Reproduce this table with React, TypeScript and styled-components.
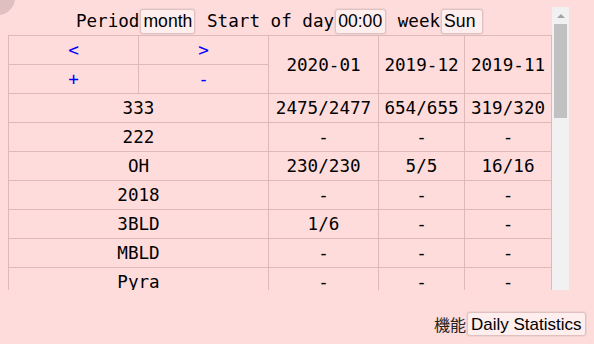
import React from 'react';
import styled, {createGlobalStyle} from 'styled-components';

const GlobalStyle = createGlobalStyle`
  html, body {
    margin: 0;
    padding: 0;
    background: #ffdcdc;
  }
  body {
    font-family: "DejaVu Sans Mono", monospace;
  }
`

const Page = styled.div`
  position: relative;
  width: 594px;
  height: 344px;
  box-sizing: border-box;
  padding: 7px 8px 0 8px;
  overflow: hidden;
`

const Corner = styled.div`
  position: absolute;
  left: -19px;
  top: -19px;
  width: 34px;
  height: 34px;
  border-radius: 50%;
  background: #dfbfbf;
`

const Frame = styled.div`
  display: flex;
  width: 561px;
  height: 283px;
`

const Scroller = styled.div`
  width: 544px;
  height: 100%;
  overflow: hidden;
`

const ScrollBar = styled.div`
  width: 17px;
  height: 100%;
  background: #f1f1f1;
  display: flex;
  flex-direction: column;
  align-items: center;
`

const ArrowUp = styled.div`
  width: 17px;
  height: 17px;
  display: flex;
  align-items: center;
  justify-content: center;
  &::before {
    content: '';
    width: 0;
    height: 0;
    border-left: 4px solid transparent;
    border-right: 4px solid transparent;
    border-bottom: 4px solid #a3a3a3;
  }
`

const Thumb = styled.div<{$size: number}>`
  width: 13px;
  height: ${(p) => p.$size}px;
  background: #c1c1c1;
`

const Options = styled.div`
  width: 544px;
  height: 28px;
  display: flex;
  align-items: center;
  justify-content: center;
  white-space: pre;
  font-size: 17.6px;
  color: #000;
`

const Pick = styled.select`
  appearance: none;
  -webkit-appearance: none;
  height: 25px;
  margin: 0 1px;
  padding: 0 2px;
  border: 1px solid #e2c0c0;
  box-shadow: 0 0 0 1px #efd2d2;
  border-radius: 3px;
  background: #ffeeee;
  color: #000;
  font-family: "Liberation Sans", Arial, sans-serif;
  font-size: 17.6px;
  outline: none;
`

const Table = styled.table`
  width: 543px;
  border-collapse: collapse;
  table-layout: fixed;
  font-size: 17.6px;
  color: #000;
  td {
    height: 28px;
    padding: 0;
    border: 1px solid #dfb8b8;
    text-align: center;
    vertical-align: middle;
    white-space: nowrap;
  }
`

const Nav = styled.td`
  color: #0000ff;
  cursor: pointer;
`

const Footer = styled.div`
  display: flex;
  justify-content: flex-end;
  align-items: center;
  margin-top: 22px;
  height: 24px;
  gap: 1px;
`

const Label = styled.span`
  font-family: "Liberation Sans", "Noto Sans CJK JP", sans-serif;
  font-size: 16px;
  color: #222;
`

const ToolPick = styled(Pick)`
  height: 24px;
  margin: 0;
  padding: 0 3px;
  font-size: 17px;
`

const months = ['2020-01', '2019-12', '2019-11'];

const rows: [string, string, string, string][] = [
  ['333', '2475/2477', '654/655', '319/320'],
  ['222', '-', '-', '-'],
  ['OH', '230/230', '5/5', '16/16'],
  ['2018', '-', '-', '-'],
  ['3BLD', '1/6', '-', '-'],
  ['MBLD', '-', '-', '-'],
  ['Pyra', '-', '-', '-'],
];

const hours = Array.from({length: 24}, (_, i) => `${String(i).padStart(2, '0')}:00`);
const days = ['Sun', 'Mon', 'Tue', 'Wed', 'Thu', 'Fri', 'Sat'];

const App = () => {
  const [period, setPeriod] = React.useState('month');
  const [start, setStart] = React.useState('00:00');
  const [week, setWeek] = React.useState('Sun');
  const [tool, setTool] = React.useState('Daily Statistics');
  return (
    <Page>
      <GlobalStyle/>
      <Corner/>
      <Frame>
        <Scroller>
          <Options>
            Period
            <Pick value={period} onChange={(e) => setPeriod(e.target.value)}>
              <option>week</option>
              <option>month</option>
              <option>year</option>
            </Pick>
            {' Start of day'}
            <Pick value={start} onChange={(e) => setStart(e.target.value)}>
              {hours.map((h) => <option key={h}>{h}</option>)}
            </Pick>
            {' week'}
            <Pick value={week} onChange={(e) => setWeek(e.target.value)}>
              {days.map((d) => <option key={d}>{d}</option>)}
            </Pick>
          </Options>
          <Table>
            <colgroup>
              <col style={{width: 130}}/>
              <col style={{width: 130}}/>
              <col style={{width: 110}}/>
              <col style={{width: 86}}/>
              <col style={{width: 87}}/>
            </colgroup>
            <tbody>
              <tr>
                <Nav>&lt;</Nav>
                <Nav>&gt;</Nav>
                {months.map((m) => <td key={m} rowSpan={2}>{m}</td>)}
              </tr>
              <tr>
                <Nav>+</Nav>
                <Nav>-</Nav>
              </tr>
              {rows.map(([name, ...vals]) => (
                <tr key={name}>
                  <td colSpan={2}>{name}</td>
                  {vals.map((v, i) => <td key={i}>{v}</td>)}
                </tr>
              ))}
            </tbody>
          </Table>
        </Scroller>
        <ScrollBar>
          <ArrowUp/>
          <Thumb $size={94}/>
        </ScrollBar>
      </Frame>
      <Footer>
        <Label>機能</Label>
        <ToolPick value={tool} onChange={(e) => setTool(e.target.value)}>
          <option>Daily Statistics</option>
          <option>Trend</option>
          <option>Distribution</option>
        </ToolPick>
      </Footer>
    </Page>
  );
};

export default App;
